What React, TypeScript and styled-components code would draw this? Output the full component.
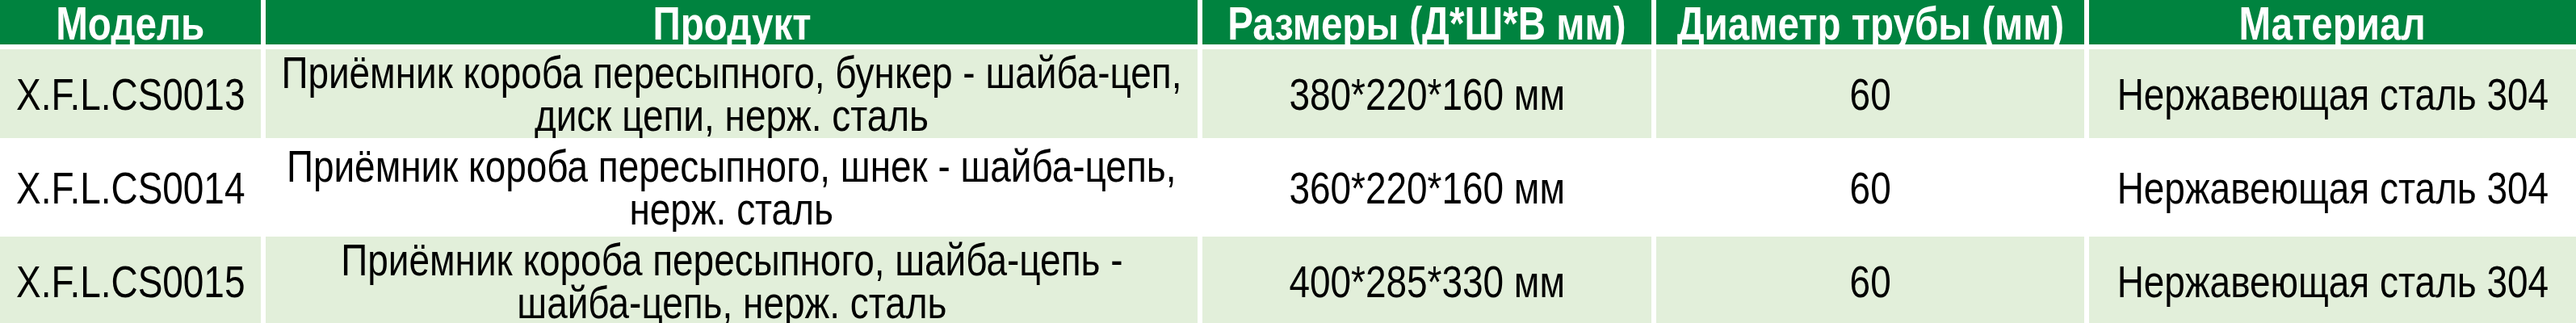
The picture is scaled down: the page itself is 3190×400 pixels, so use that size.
import React from "react";
import styled, { createGlobalStyle } from "styled-components";

const Global = createGlobalStyle`
  html, body { margin: 0; padding: 0; background: #ffffff; }
  body { font-family: "Liberation Sans", Arial, sans-serif; }
`;

const Table = styled.div`
  display: grid;
  grid-template-columns: 323px 1154px 556px 530px 1fr;
  grid-template-rows: 55px;
  grid-auto-rows: 110px;
  column-gap: 6px;
  row-gap: 6px;
  width: 3190px;
  background: #ffffff;
`;

const HeadCell = styled.div`
  background: #00833f;
  color: #ffffff;
  display: flex;
  justify-content: center;
  align-items: center;
  overflow: hidden;
`;

const HeadText = styled.span`
  font-weight: 700;
  font-size: 58px;
  line-height: 52px;
  padding-top: 3px;
  white-space: nowrap;
  display: inline-block;
  transform: scaleX(0.82);
  transform-origin: center;
`;

const Cell = styled.div<{ $tinted: boolean }>`
  background: ${(p) => (p.$tinted ? "#e2efda" : "#ffffff")};
  color: #000000;
  display: flex;
  align-items: center;
  justify-content: center;
  overflow: hidden;
`;

const CellText = styled.span`
  font-size: 56px;
  line-height: 53px;
  text-align: center;
  white-space: nowrap;
  display: inline-block;
  transform: scaleX(0.82);
  transform-origin: center;
`;

const headers = ["Модель", "Продукт", "Размеры (Д*Ш*В мм)", "Диаметр трубы (мм)", "Материал"];

const rows = [
  {
    model: "X.F.L.CS0013",
    product: ["Приёмник короба пересыпного, бункер - шайба-цеп,", "диск цепи, нерж. сталь"],
    size: "380*220*160 мм",
    dia: "60",
    mat: "Нержавеющая сталь 304",
  },
  {
    model: "X.F.L.CS0014",
    product: ["Приёмник короба пересыпного, шнек - шайба-цепь,", "нерж. сталь"],
    size: "360*220*160 мм",
    dia: "60",
    mat: "Нержавеющая сталь 304",
  },
  {
    model: "X.F.L.CS0015",
    product: ["Приёмник короба пересыпного, шайба-цепь -", "шайба-цепь, нерж. сталь"],
    size: "400*285*330 мм",
    dia: "60",
    mat: "Нержавеющая сталь 304",
  },
];

export default function App() {
  return (
    <>
      <Global />
      <Table>
        {headers.map((h) => (
          <HeadCell key={h}>
            <HeadText>{h}</HeadText>
          </HeadCell>
        ))}
        {rows.map((r, i) => {
          const t = i % 2 === 0;
          return (
            <React.Fragment key={r.model}>
              <Cell $tinted={t}>
                <CellText>{r.model}</CellText>
              </Cell>
              <Cell $tinted={t}>
                <CellText>
                  {r.product[0]}
                  <br />
                  {r.product[1]}
                </CellText>
              </Cell>
              <Cell $tinted={t}>
                <CellText>{r.size}</CellText>
              </Cell>
              <Cell $tinted={t}>
                <CellText>{r.dia}</CellText>
              </Cell>
              <Cell $tinted={t}>
                <CellText>{r.mat}</CellText>
              </Cell>
            </React.Fragment>
          );
        })}
      </Table>
    </>
  );
}
